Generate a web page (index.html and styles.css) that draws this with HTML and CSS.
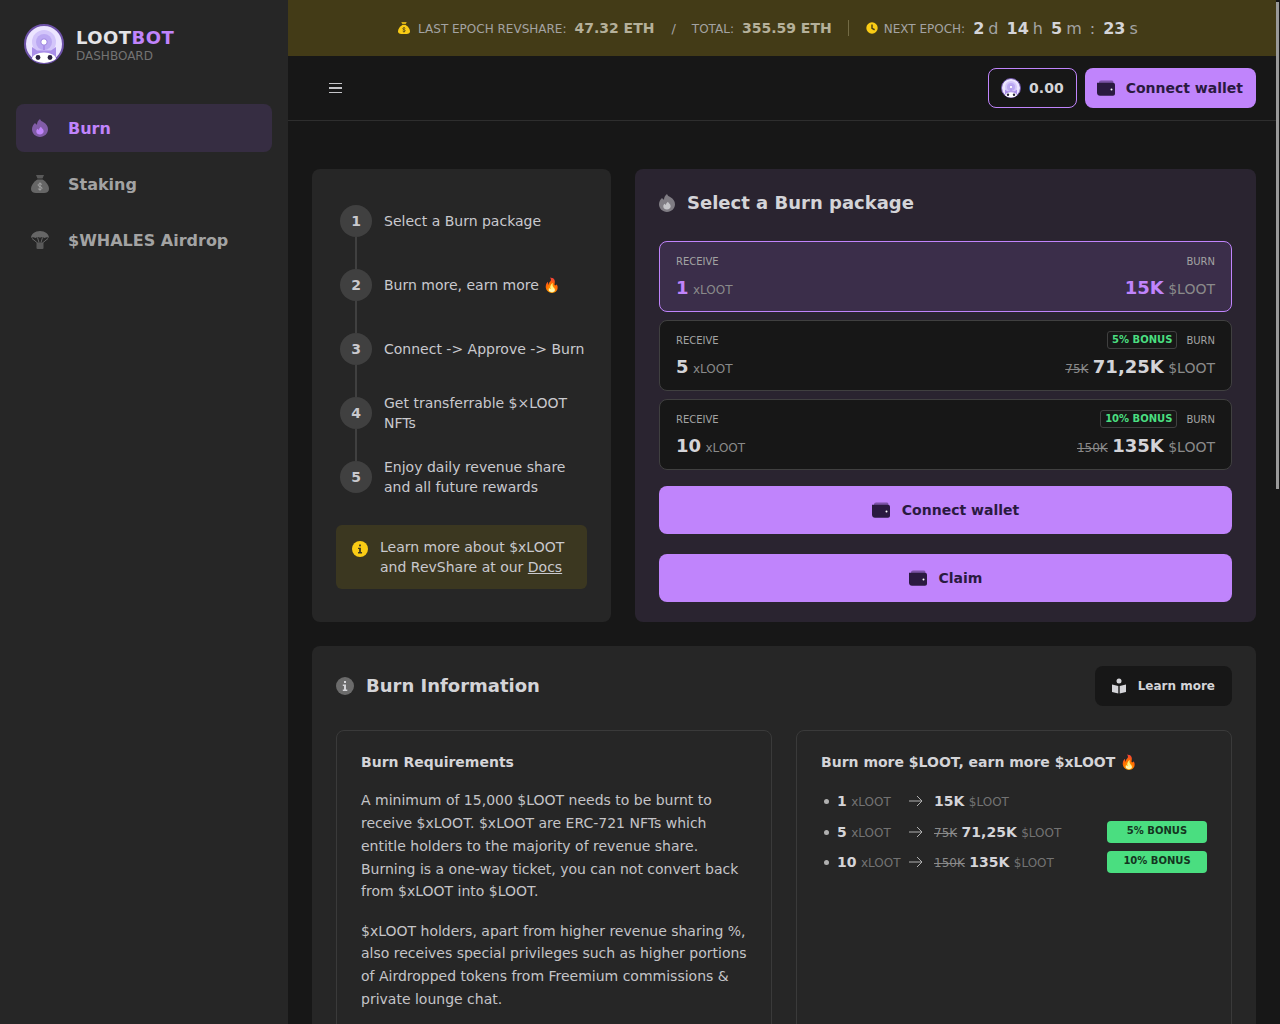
FILE: index.html
```html
<!DOCTYPE html>
<html lang="en">
<head>
    <meta charset="UTF-8">
    <title>Lootbot Dashboard</title>
    <link rel="stylesheet" href="styles.css">
</head>
<body>
<svg class="sprite" width="0" height="0">
    <defs>
        <clipPath id="logo-clip"><circle cx="20" cy="20" r="19"/></clipPath>
    </defs>
    <symbol id="wallet" viewBox="0 0 18 16">
        <path d="M2 3V2.500C2 1.400 2.900 .5 4 .5h11c1.100 0 1.500.9 1.500 2.500z" fill="currentColor" opacity=".45"/>
        <path d="M2 3h14c1.100 0 2 .9 2 2v9c0 1.100-.9 2-2 2H3c-1.700 0-3-1.300-3-3V3z" fill="currentColor" transform="translate(0 -.2)"/>
        <circle cx="14.500" cy="9.500" r="1" fill="#fff"/>
    </symbol>
    <symbol id="flame" viewBox="-1 0 18 20" preserveAspectRatio="none">
        <path d="M8 0c.5 1.800 1.800 2.600 3.500 3.700C14.200 5.500 16 8 16 11.500 16 16.200 12.500 20 8 20S0 16.200 0 11.500C0 8.500 1.300 6.200 3 4.500c.6 1 1.200 1.500 2 1.800C5 4 6 1.500 8 0z" fill="currentColor" opacity=".55"/>
        <path d="M9 8.500c.3 1.500 2.700 2.500 2.700 5.200 0 2.200-1.700 3.500-3.700 3.500s-3.700-1.400-3.700-3.300c0-1.400.6-2.300 1.500-3 .3.700.7 1 1.200 1.200C7 10.800 7.700 9.300 9 8.500z" fill="currentColor"/>
    </symbol>
    <symbol id="moneybag" viewBox="0 0 18 18">
        <path d="M5 0h8l-1.500 3.500h-5z" fill="currentColor" opacity=".8"/>
        <path d="M6.500 4.500h5C15 6.500 18 10.500 18 14c0 2.800-2 4-5 4H5c-3 0-5-1.200-5-4 0-3.500 3-7.500 6.500-9.500z" fill="currentColor"/>
        <path class="bag-mark" d="M11 9.600C10.500 8.900 9.800 8.700 9 8.700c-1.100 0-1.900.5-1.900 1.400 0 2 3.900 1 3.900 3 0 .9-.9 1.400-2 1.400-.9 0-1.600-.3-2.100-1M9 7.500v8.200"/>
    </symbol>
    <symbol id="parachute" viewBox="0 0 18 18">
        <path d="M9 0c5 0 9 3 9 6.800-1.500-.8-3-.8-4.300.2C12.400 6.200 10.700 6 9 6.800 7.300 6 5.600 6.200 4.300 7 3 6 1.500 6 0 6.800 0 3 4 0 9 0z" fill="currentColor"/>
        <path d="M1 7.500l5.500 4.500M17 7.500l-5.500 4.500M6.500 6.500l1.500 5M11.500 6.500l-1.500 5" stroke="currentColor" stroke-width="1"/>
        <rect x="5.500" y="11.500" width="7" height="6.500" rx="1" fill="currentColor" opacity=".8"/>
    </symbol>
    <symbol id="logo" viewBox="0 0 40 40">
        <circle cx="20" cy="20" r="19" fill="#ece5ff" stroke="#6d52a8" stroke-width="2"/>
        <g clip-path="url(#logo-clip)">
            <circle cx="20" cy="18" r="12" fill="#d3c5fa"/>
            <circle cx="20" cy="18" r="8" fill="#bba8f2"/>
            <path d="M19 20h2v6h-2z" fill="#a98ee8"/>
            <circle cx="20" cy="18" r="3.200" fill="#fff" stroke="#9a7fe0"/>
            <path d="M8 23l5 3.500h14l5-3.500v14H8z" fill="#a98ee8"/>
            <ellipse cx="20" cy="35" rx="12" ry="6.500" fill="#fff"/>
            <circle cx="14" cy="33.500" r="2.400" fill="#2b2340"/>
            <circle cx="26" cy="33.500" r="2.400" fill="#2b2340"/>
        </g>
    </symbol>
    <symbol id="info" viewBox="0 0 18 18">
        <circle cx="9" cy="9" r="9" fill="currentColor"/>
        <rect class="info-mark" x="8" y="4" width="2" height="2"/>
        <path class="info-mark" d="M6.800 7.500H10v5h1.300V14H6.800v-1.500H8V9H6.800z"/>
    </symbol>
</svg>

<aside class="sidebar">
    <div class="brand">
        <svg class="brand-logo"><use href="#logo"/></svg>
        <div>
            <div class="brand-name">LOOT<span>BOT</span></div>
            <div class="brand-sub">DASHBOARD</div>
        </div>
    </div>
    <nav class="nav">
        <a class="nav-item active"><svg class="nav-icon"><use href="#flame"/></svg>Burn</a>
        <a class="nav-item"><svg class="nav-icon"><use href="#moneybag"/></svg>Staking</a>
        <a class="nav-item"><svg class="nav-icon"><use href="#parachute"/></svg>$WHALES Airdrop</a>
    </nav>
</aside>

<div class="page">
    <div class="ticker">
        <svg class="ticker-icon"><use href="#moneybag"/></svg>
        <span class="ticker-label">LAST EPOCH REVSHARE:</span>
        <b class="ticker-val">47.32 ETH</b>
        <span class="ticker-slash">/</span>
        <span class="ticker-label">TOTAL:</span>
        <b class="ticker-val">355.59 ETH</b>
        <span class="ticker-sep"></span>
        <svg class="ticker-clock" viewBox="0 0 16 16"><circle cx="8" cy="8" r="6.500" fill="#facc15"/><path d="M8 4v4.500l3 1.500" fill="none" stroke="#433b17" stroke-width="1.600"/></svg>
        <span class="ticker-label">NEXT EPOCH:</span>
        <span class="count"><b>2</b> d</span>
        <span class="count"><b>14</b> h</span>
        <span class="count"><b>5</b> m</span>
        <span class="count">:</span>
        <span class="count"><b>23</b> s</span>
    </div>

    <header class="topbar">
        <div class="burger"><span></span><span></span><span></span></div>
        <div class="balance"><svg class="balance-logo"><use href="#logo"/></svg>0.00</div>
        <button class="btn btn-small"><svg class="wallet"><use href="#wallet"/></svg>Connect wallet</button>
    </header>

    <main class="main">
        <div class="top-row">
            <section class="card steps-card">
                <ol class="steps">
                    <li><span class="num">1</span><span>Select a Burn package</span></li>
                    <li><span class="num">2</span><span>Burn more, earn more 🔥</span></li>
                    <li><span class="num">3</span><span>Connect -&gt; Approve -&gt; Burn</span></li>
                    <li><span class="num">4</span><span>Get transferrable $×LOOT NFTs</span></li>
                    <li><span class="num">5</span><span>Enjoy daily revenue share and all future rewards</span></li>
                </ol>
                <div class="notice">
                    <svg class="notice-icon"><use href="#info"/></svg>
                    <div>Learn more about $xLOOT and RevShare at our <u>Docs</u></div>
                </div>
            </section>

            <section class="card packages-card">
                <h2 class="title"><svg class="title-flame"><use href="#flame"/></svg>Select a Burn package</h2>
                <div class="packages">
                    <div class="pkg selected">
                        <div class="pkg-row">
                            <span class="pkg-label">RECEIVE</span>
                            <span class="pkg-label">BURN</span>
                        </div>
                        <div class="pkg-row">
                            <span><b class="amount">1</b> <span class="unit">xLOOT</span></span>
                            <span><b class="amount">15K</b> <span class="unit unit-burn">$LOOT</span></span>
                        </div>
                    </div>
                    <div class="pkg">
                        <div class="pkg-row">
                            <span class="pkg-label">RECEIVE</span>
                            <span class="pkg-right"><span class="chip">5% BONUS</span><span class="pkg-label">BURN</span></span>
                        </div>
                        <div class="pkg-row">
                            <span><b class="amount">5</b> <span class="unit">xLOOT</span></span>
                            <span><s class="old">75K</s> <b class="amount">71,25K</b> <span class="unit unit-burn">$LOOT</span></span>
                        </div>
                    </div>
                    <div class="pkg">
                        <div class="pkg-row">
                            <span class="pkg-label">RECEIVE</span>
                            <span class="pkg-right"><span class="chip">10% BONUS</span><span class="pkg-label">BURN</span></span>
                        </div>
                        <div class="pkg-row">
                            <span><b class="amount">10</b> <span class="unit">xLOOT</span></span>
                            <span><s class="old">150K</s> <b class="amount">135K</b> <span class="unit unit-burn">$LOOT</span></span>
                        </div>
                    </div>
                </div>
                <button class="btn btn-wide"><svg class="wallet"><use href="#wallet"/></svg>Connect wallet</button>
                <button class="btn btn-wide"><svg class="wallet"><use href="#wallet"/></svg>Claim</button>
            </section>
        </div>

        <section class="card info-card">
            <div class="info-head">
                <h2 class="title"><svg class="title-info"><use href="#info"/></svg>Burn Information</h2>
                <button class="learn">
                    <svg class="learn-icon" viewBox="0 0 16 16"><circle cx="8" cy="3" r="2.500" fill="currentColor"/><path d="M1 6.500l6.300 1.500v7.500L1 14zM15 6.500L8.700 8v7.500L15 14z" fill="currentColor"/></svg>
                    Learn more
                </button>
            </div>
            <div class="info-cols">
                <div class="info-box">
                    <h3>Burn Requirements</h3>
                    <p>A minimum of 15,000 $LOOT needs to be burnt to receive $xLOOT. $xLOOT are ERC-721 NFTs which entitle holders to the majority of revenue share. Burning is a one-way ticket, you can not convert back from $xLOOT into $LOOT.</p>
                    <p>$xLOOT holders, apart from higher revenue sharing %, also receives special privileges such as higher portions of Airdropped tokens from Freemium commissions &amp; private lounge chat.</p>
                </div>
                <div class="info-box">
                    <h3>Burn more $LOOT, earn more $xLOOT 🔥</h3>
                    <ul class="tiers">
                        <li>
                            <span class="tier-from"><b>1</b> <i>xLOOT</i></span>
                            <svg class="arrow" viewBox="0 0 14 12"><path d="M0 6h13M8 1l5 5-5 5" fill="none" stroke="currentColor"/></svg>
                            <span class="tier-to"><b>15K</b> <i>$LOOT</i></span>
                        </li>
                        <li>
                            <span class="tier-from"><b>5</b> <i>xLOOT</i></span>
                            <svg class="arrow" viewBox="0 0 14 12"><path d="M0 6h13M8 1l5 5-5 5" fill="none" stroke="currentColor"/></svg>
                            <span class="tier-to"><s>75K</s> <b>71,25K</b> <i>$LOOT</i></span>
                            <span class="tag">5% BONUS</span>
                        </li>
                        <li>
                            <span class="tier-from"><b>10</b> <i>xLOOT</i></span>
                            <svg class="arrow" viewBox="0 0 14 12"><path d="M0 6h13M8 1l5 5-5 5" fill="none" stroke="currentColor"/></svg>
                            <span class="tier-to"><s>150K</s> <b>135K</b> <i>$LOOT</i></span>
                            <span class="tag">10% BONUS</span>
                        </li>
                    </ul>
                </div>
            </div>
        </section>
    </main>
</div>
<div class="scroll-track"><div class="scroll-thumb"></div></div>
</body>
</html>
```

FILE: styles.css
```css
* {
    box-sizing: border-box;
}
html, body {
    height: 1024px;
    overflow: hidden;
}
body {
    margin: 0;
    display: flex;
    background-color: #171717;
    color: #d4d4d8;
    font-family: "DejaVu Sans", sans-serif;
    font-size: 14px;
}
.sprite {
    position: absolute;
}
h2, h3, p, ol, ul {
    margin: 0;
    padding: 0;
    list-style: none;
}
.info-mark {
    fill: var(--mark);
}
.bag-mark {
    fill: none;
    stroke: var(--mark);
    stroke-width: 1;
}

/* sidebar */
.sidebar {
    width: 288px;
    flex-shrink: 0;
    background-color: #262626;
    padding: 24px 16px;
}
.brand {
    display: flex;
    align-items: center;
    gap: 12px;
    padding-left: 8px;
    height: 40px;
}
.brand-logo {
    width: 40px;
    height: 40px;
}
.brand-name {
    font-size: 18px;
    line-height: 22px;
    font-weight: 700;
    letter-spacing: .45px;
    color: #e4e4e7;
    margin-top: 2px;
}
.brand-name span {
    color: #c084fc;
}
.brand-sub {
    font-size: 12px;
    line-height: 14px;
    color: #737373;
}
.nav {
    margin-top: 40px;
    display: flex;
    flex-direction: column;
    gap: 8px;
}
.nav-item {
    display: flex;
    align-items: center;
    height: 48px;
    padding-left: 15px;
    border-radius: 8px;
    color: #a3a3a3;
    font-size: 16px;
    font-weight: 700;
}
.nav-item.active {
    background-color: #362d42;
    color: #c084fc;
}
.nav-icon {
    --mark: #a3a3a3;
    width: 18px;
    height: 18px;
    margin-right: 19px;
    color: #666;
}
.active .nav-icon {
    color: #c084fc;
}

/* ticker */
.page {
    flex: 1;
    min-width: 0;
}
.ticker {
    height: 56px;
    display: flex;
    align-items: center;
    justify-content: center;
    background-color: #433b17;
    color: #a3a3a3;
    font-size: 12px;
    padding-right: 24px;
}
.ticker-icon {
    --mark: #433b17;
    width: 12px;
    height: 14px;
    color: #facc15;
    margin-right: 8px;
}
.ticker-label {
    margin: 2px 8px 0 0;
}
.ticker-val {
    font-size: 14px;
    color: #b5b09a;
}
.ticker-slash {
    margin: 0 16px 0 17px;
    font-size: 13px;
}
.ticker-sep {
    width: 1px;
    height: 16px;
    background-color: #736b45;
    margin: 0 16px;
}
.ticker-clock {
    width: 14px;
    height: 14px;
    margin-right: 5px;
}
.count {
    font-size: 16px;
    word-spacing: -1px;
    margin-right: 8px;
    color: #a3a3a3;
}
.count b {
    color: #d4d4d8;
}

/* top bar */
.topbar {
    height: 65px;
    display: flex;
    align-items: center;
    justify-content: flex-end;
    padding: 0 24px;
    border-bottom: 1px solid #2e2e2e;
}
.burger {
    margin-right: auto;
    margin-left: 17px;
    width: 13px;
    display: flex;
    flex-direction: column;
    gap: 3px;
}
.burger span {
    height: 1.500px;
    background-color: #c4c4c8;
}
.balance {
    display: flex;
    align-items: center;
    height: 40px;
    padding: 0 12px;
    margin-right: 8px;
    border: 1px solid #c084fc;
    border-radius: 8px;
    font-weight: 700;
    gap: 8px;
}
.balance-logo {
    width: 20px;
    height: 20px;
}
.btn {
    display: flex;
    align-items: center;
    justify-content: center;
    border: 0;
    background-color: #c084fc;
    color: #2a1a40;
    font-family: inherit;
    font-size: 14px;
    font-weight: 700;
    border-radius: 8px;
    cursor: pointer;
}
.btn-small {
    height: 40px;
    padding: 0 13px 0 12px;
}
.btn-wide {
    width: 100%;
    height: 48px;
    margin-top: 20px;
}
.packages + .btn-wide {
    margin-top: 16px;
}
.wallet {
    width: 18px;
    height: 16px;
    margin-right: 12px;
    color: #2a1a40;
}
.btn-small .wallet {
    margin-right: 11px;
}

/* main */
.main {
    padding: 48px 24px 24px;
}
.top-row {
    display: grid;
    grid-template-columns: 299px 1fr;
    gap: 24px;
}
.card {
    background-color: #262626;
    border-radius: 8px;
}
.steps-card {
    padding: 36px 24px 33px;
}
.steps li {
    position: relative;
    display: flex;
    align-items: center;
    gap: 12px;
    height: 32px;
    margin: 0 0 32px 4px;
    line-height: 20px;
    color: #c9c9ce;
}
.steps li:last-child {
    margin-bottom: 0;
}
.steps li:not(:last-child)::after {
    content: "";
    position: absolute;
    left: 15px;
    top: 32px;
    width: 2px;
    height: 32px;
    background-color: #404040;
}
.num {
    width: 32px;
    height: 32px;
    flex-shrink: 0;
    display: flex;
    align-items: center;
    justify-content: center;
    border-radius: 50%;
    background-color: #404040;
    font-weight: 700;
}
.notice {
    display: flex;
    gap: 12px;
    margin-top: 32px;
    padding: 12px 16px;
    border-radius: 6px;
    background-color: #3b3720;
    line-height: 20px;
    color: #c9c9ce;
}
.notice-icon {
    --mark: #3b3720;
    width: 16px;
    height: 16px;
    flex-shrink: 0;
    margin-top: 4px;
    color: #facc15;
}
.packages-card {
    padding: 24px 24px 20px;
    background-color: #2a2430;
}
.title {
    display: flex;
    align-items: center;
    font-size: 18px;
    line-height: 20px;
    font-weight: 700;
    color: #d4d4d8;
}
.title-flame {
    width: 18px;
    height: 18px;
    margin: 0 11px 0 -1px;
    color: #c4c4c8;
}
.packages {
    margin-top: 28px;
    display: flex;
    flex-direction: column;
    gap: 8px;
}
.pkg {
    height: 71px;
    padding: 11px 16px;
    border: 1px solid #404040;
    border-radius: 8px;
    background-color: #171717;
}
.pkg.selected {
    border-color: #c084fc;
    background-color: #3b2e4a;
}
.pkg-row {
    display: flex;
    justify-content: space-between;
    align-items: center;
    height: 16px;
}
.pkg-row + .pkg-row {
    margin-top: 4px;
    height: 28px;
}
.pkg-label {
    font-size: 10px;
    color: #a3a3a3;
}
.pkg-right {
    display: flex;
    align-items: center;
}
.chip {
    height: 18px;
    line-height: 16px;
    padding: 0 4px;
    margin-right: 9px;
    border: 1px solid #404040;
    border-radius: 3px;
    color: #4ade80;
    font-size: 10px;
    font-weight: 700;
}
.amount {
    font-size: 18px;
    color: #d4d4d8;
}
.selected .amount {
    color: #c084fc;
}
.unit {
    font-size: 12px;
    color: #8a8a8a;
}
.unit-burn {
    font-size: 14px;
}
.old {
    font-size: 12px;
    color: #8a8a8a;
}

/* info */
.info-card {
    margin-top: 24px;
    padding: 20px 24px 24px;
}
.info-head {
    display: flex;
    justify-content: space-between;
    align-items: center;
    height: 40px;
}
.title-info {
    --mark: #d4d4d8;
    width: 18px;
    height: 18px;
    margin-right: 12px;
    color: #6b6b6b;
}
.learn {
    display: flex;
    align-items: center;
    height: 40px;
    padding: 0 17px 0 16px;
    border: 0;
    border-radius: 8px;
    background-color: #171717;
    color: #d4d4d8;
    font-family: inherit;
    font-size: 12px;
    font-weight: 700;
}
.learn-icon {
    width: 16px;
    height: 16px;
    margin-right: 11px;
}
.info-cols {
    display: grid;
    grid-template-columns: 436px 436px;
    gap: 24px;
    margin-top: 24px;
}
.info-box {
    height: 400px;
    padding: 20px 24px;
    border: 1px solid #3a3a3a;
    border-radius: 8px;
}
.info-box h3 {
    font-size: 14px;
    line-height: 22px;
    font-weight: 700;
    color: #d4d4d8;
}
.info-box p {
    margin-top: 16.400px;
    line-height: 22.750px;
    color: #c4c4c8;
}
.tiers {
    margin-top: 13px;
}
.tiers li {
    position: relative;
    display: flex;
    align-items: center;
    height: 30.500px;
    padding-left: 16px;
}
.tiers li::before {
    content: "";
    position: absolute;
    left: 3px;
    top: 13px;
    width: 5px;
    height: 5px;
    border-radius: 50%;
    background-color: #b0b0b0;
}
.tier-from {
    width: 72px;
    flex-shrink: 0;
    white-space: nowrap;
}
.tiers b {
    font-weight: 700;
    color: #d4d4d8;
}
.tiers i {
    font-style: normal;
    font-size: 12px;
    color: #737373;
}
.tiers s {
    font-size: 12px;
    color: #8a8a8a;
}
.arrow {
    width: 14px;
    height: 12px;
    margin-right: 11px;
    color: #b0b0b0;
}
.tag {
    margin-left: auto;
    width: 100px;
    height: 22px;
    line-height: 20px;
    text-align: center;
    border-radius: 4px;
    background-color: #4ade80;
    color: #14351f;
    font-size: 10px;
    font-weight: 700;
}

/* scrollbar drawn over the page edge */
.scroll-track {
    position: absolute;
    top: 0;
    right: 0;
    bottom: 0;
    width: 4px;
    background-color: #171717;
}
.scroll-thumb {
    width: 3px;
    height: 487px;
    margin-top: 2px;
    background-color: #9a9a9a;
}
```
